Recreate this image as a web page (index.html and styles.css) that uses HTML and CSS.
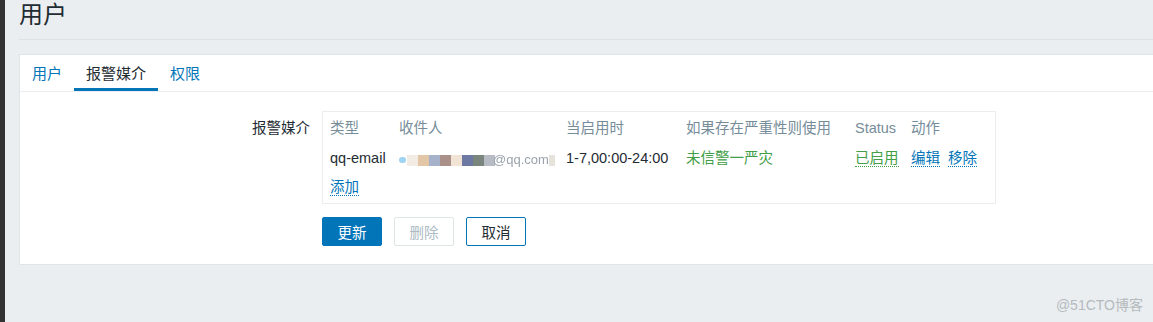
FILE: index.html
```html
<!DOCTYPE html>
<html lang="zh-CN">
<head>
  <meta charset="UTF-8">
  <title>用户</title>
  <link rel="stylesheet" href="styles.css">
</head>
<body>
  <div class="layout">
    <div class="side-strip"></div>

    <div class="main">
      <!-- Page title -->
      <h1 class="page-title">用户</h1>

      <div class="panel">
        <!-- Tabs -->
        <ul class="tabs">
          <li class="tab">用户</li>
          <li class="tab active">报警媒介</li>
          <li class="tab">权限</li>
        </ul>

        <!-- Media form -->
        <div class="form-row">
          <label class="form-label">报警媒介</label>
          <div class="form-field">
            <div class="media-box">
              <div class="media-grid">
                <div class="head">类型</div>
                <div class="head">收件人</div>
                <div class="head">当启用时</div>
                <div class="head">如果存在严重性则使用</div>
                <div class="head">Status</div>
                <div class="head">动作</div>

                <div class="cell">qq-email</div>
                <div class="cell">
                  <span class="masked">
                    <span class="blob"></span>
                    <span class="blk c1"></span>
                    <span class="blk c2"></span>
                    <span class="blk c3"></span>
                    <span class="blk c4"></span>
                    <span class="blk c5"></span>
                    <span class="blk c6"></span>
                    <span class="blk c7"></span>
                    <span class="blk c8"></span>
                    <span class="masked-text">@qq.com</span>
                    <span class="blk c9"></span>
                  </span>
                </div>
                <div class="cell">1-7,00:00-24:00</div>
                <div class="cell green">未信警一严灾</div>
                <div class="cell"><a class="link green-link">已启用</a></div>
                <div class="cell actions"><a class="link">编辑</a><a class="link">移除</a></div>
              </div>
              <div class="add-row"><a class="link">添加</a></div>
            </div>

            <div class="buttons">
              <button class="btn primary">更新</button>
              <button class="btn disabled">删除</button>
              <button class="btn outline">取消</button>
            </div>
          </div>
        </div>
      </div>
    </div>
  </div>

  <div class="watermark">@51CTO博客</div>
</body>
</html>
```

FILE: styles.css
```css
/* General */
body {
  margin: 0;
  background-color: #ebeef0;
  color: #1f2c33;
  font-family: "Liberation Sans", "Noto Sans CJK SC", sans-serif;
  font-size: 14.5px;
}

.layout {
  display: flex;
  min-height: 322px;
}

.side-strip {
  width: 5px;
  flex-shrink: 0;
  background-color: #333;
}

.main {
  flex: 1;
  padding-left: 14px;
}

/* Title */
.page-title {
  margin: 0;
  height: 39px;
  line-height: 30px;
  font-size: 24px;
  font-weight: normal;
  color: #1f2c33;
  border-bottom: 1px solid #dde2e5;
}

/* Panel */
.panel {
  margin-top: 14px;
  background-color: #fff;
  border: 1px solid #dfe4e7;
  border-right: none;
  padding-bottom: 18px;
}

/* Tabs */
.tabs {
  display: flex;
  list-style: none;
  margin: 0;
  padding: 0;
  border-bottom: 1px solid #ebeef0;
}
.tab {
  padding: 0 12px;
  height: 33px;
  line-height: 37px;
  font-size: 15px;
  color: #0275b8;
  border-bottom: 3px solid transparent;
}
.tab.active {
  color: #1f2c33;
  border-bottom-color: #0275b8;
}

/* Form */
.form-row {
  display: flex;
  padding-top: 19px;
}
.form-label {
  width: 290px;
  margin-right: 12px;
  text-align: right;
  line-height: 18px;
  padding-top: 8px;
}
.form-field {
  width: 674px;
}

.media-box {
  border: 1px solid #ebeef0;
  padding: 7px 7px 7px;
}
.media-grid {
  display: grid;
  grid-template-columns: 69px 167px 120px 169px 56px auto;
  row-gap: 12px;
  line-height: 18px;
}
.head {
  color: #768d99;
  white-space: nowrap;
}
.cell {
  white-space: nowrap;
}
.green {
  color: #429e47;
}

.link {
  color: #0275b8;
  border-bottom: 1px dotted #0275b8;
  cursor: pointer;
}
.green-link {
  color: #429e47;
  border-bottom-color: #429e47;
}
.actions .link {
  margin-right: 8px;
}

.add-row {
  margin-top: 9px;
  line-height: 18px;
}

/* Masked recipient */
.masked {
  display: inline-flex;
  align-items: center;
  height: 18px;
  filter: blur(0.6px);
}
.blob {
  width: 7px;
  height: 6px;
  border-radius: 4px;
  background-color: #9fd3f2;
  margin-right: 1px;
}
.blk {
  width: 11px;
  height: 11px;
}
.c1 { background-color: #f3ece4; }
.c2 { background-color: #e2c6a6; }
.c3 { background-color: #a6b2c9; }
.c4 { background-color: #a99189; }
.c5 { background-color: #f1e4d4; }
.c6 { background-color: #6e79a3; }
.c7 { background-color: #7a857e; }
.c8 { background-color: #b7bcc4; }
.c9 { background-color: #e6e2dc; width: 6px; }
.masked-text {
  color: #9aa3ab;
  font-size: 13px;
  margin-left: -2px;
}

/* Buttons */
.buttons {
  display: flex;
  gap: 12px;
  margin-top: 13px;
}
.btn {
  width: 60px;
  height: 29px;
  font-family: inherit;
  font-size: 14.5px;
  border-radius: 2px;
  border: 1px solid #0275b8;
  padding: 0;
}
.btn.primary {
  background-color: #0275b8;
  color: #fff;
}
.btn.disabled {
  background-color: #fff;
  border-color: #dfe4e7;
  color: #acbbc4;
}
.btn.outline {
  background-color: #fff;
  color: #1f2c33;
}

/* Watermark */
.watermark {
  position: absolute;
  right: 10px;
  bottom: 8px;
  color: #b4babe;
  font-size: 14px;
}
```
